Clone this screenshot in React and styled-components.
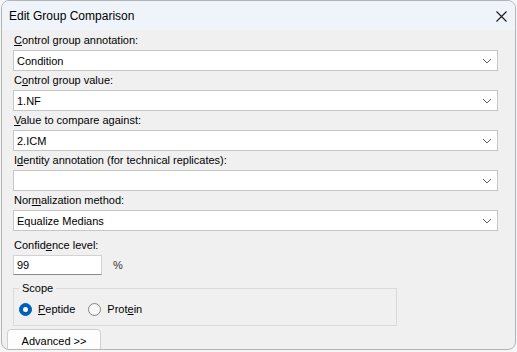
import styled, { createGlobalStyle } from "styled-components";

const GlobalStyle = createGlobalStyle`
    body {
        margin: 0;
        background: #f5f6f8;
        font-family: "Liberation Sans", Arial, sans-serif;
        color: #000;
    }
`;

const fields = [
    { label: ["", "C", "ontrol group annotation:"], value: "Condition" },
    { label: ["C", "o", "ntrol group value:"], value: "1.NF" },
    { label: ["", "V", "alue to compare against:"], value: "2.ICM" },
    { label: ["I", "d", "entity annotation (for technical replicates):"], value: "" },
    { label: ["Nor", "m", "alization method:"], value: "Equalize Medians" },
];

const Chevron = () => (
    <svg width="10" height="6" viewBox="0 0 10 6">
        <path d="M1 1 L5 5 L9 1" fill="none" stroke="#5a5a5a" strokeWidth="1" />
    </svg>
);

const CloseIcon = () => (
    <svg width="11" height="11" viewBox="0 0 11 11">
        <path d="M0.5 0.5 L10.5 10.5 M10.5 0.5 L0.5 10.5" stroke="#1a1a1a" strokeWidth="1.1" />
    </svg>
);

// text with an underlined access key
const Mnemonic = ({ parts }) => (
    <span>
        {parts[0]}
        <u>{parts[1]}</u>
        {parts[2]}
    </span>
);

const App = () => {
    return (
        <>
            <GlobalStyle />
            <Window>
                <TitleBar>
                    <Title>Edit Group Comparison</Title>
                    <CloseButton><CloseIcon /></CloseButton>
                </TitleBar>
                <Body>
                    {fields.map((f, i) => (
                        <Field key={i}>
                            <Label><Mnemonic parts={f.label} /></Label>
                            <Combo>
                                <span>{f.value}</span>
                                <Chevron />
                            </Combo>
                        </Field>
                    ))}
                    <Field $spaced>
                        <Label><Mnemonic parts={["Confid", "e", "nce level:"]} /></Label>
                        <InputRow>
                            <TextBox>99</TextBox>
                            <Unit>%</Unit>
                        </InputRow>
                    </Field>
                    <GroupBox>
                        <Legend>Scope</Legend>
                        <RadioRow>
                            <RadioItem>
                                <Radio $checked />
                                <Mnemonic parts={["", "P", "eptide"]} />
                            </RadioItem>
                            <RadioItem>
                                <Radio />
                                <Mnemonic parts={["Prot", "e", "in"]} />
                            </RadioItem>
                        </RadioRow>
                    </GroupBox>
                </Body>
                <Footer>
                    <Button>Advanced &gt;&gt;</Button>
                </Footer>
            </Window>
        </>
    );
};

export default App;

const Window = styled.div`
    box-sizing: border-box;
    width: 515px;
    height: 350px;
    margin-left: 1px;
    border: 1px solid #b4b4b4;
    border-radius: 8px;
    overflow: hidden;
    background: #f0f0f0;
    display: flex;
    flex-direction: column;
`;

const TitleBar = styled.div`
    height: 29px;
    flex-shrink: 0;
    background: #eef4fa;
    display: flex;
    align-items: center;
    justify-content: space-between;
    padding: 0 8px 0 7px;
`;

const Title = styled.span`
    font-size: 12px;
    padding-top: 1px;
`;

const CloseButton = styled.div`
    display: flex;
    align-items: center;
    padding-top: 1px;
`;

const Body = styled.div`
    padding: 2px 0 0 11px;
    display: flex;
    flex-direction: column;
`;

const Field = styled.div`
    display: flex;
    flex-direction: column;
    margin-top: ${p => (p.$spaced ? "6px" : "1px")};
    &:first-child {
        margin-top: 0;
    }
`;

const Label = styled.div`
    font-size: 11px;
    line-height: 16px;
    margin-bottom: 2px;
    padding-left: 1px;
    white-space: nowrap;
`;

const Combo = styled.div`
    box-sizing: border-box;
    width: 485px;
    height: 21px;
    background: #fff;
    border: 1px solid #c6c6c6;
    display: flex;
    align-items: center;
    justify-content: space-between;
    padding: 0 5px 0 3px;
    font-size: 11px;
`;

const InputRow = styled.div`
    display: flex;
    align-items: center;
    gap: 11px;
`;

const TextBox = styled.div`
    box-sizing: border-box;
    width: 89px;
    height: 20px;
    background: #fff;
    border: 1px solid #d2d2d2;
    border-bottom-color: #8a8a8a;
    padding: 0 3px;
    display: flex;
    align-items: center;
    font-size: 11px;
`;

const Unit = styled.span`
    font-size: 11px;
    color: #333;
`;

const GroupBox = styled.fieldset`
    box-sizing: border-box;
    width: 384px;
    margin: 5px 0 0 0;
    padding: 0 5px 8px 5px;
    border: 1px solid #dadada;
    border-radius: 0;
`;

const Legend = styled.legend`
    font-size: 11px;
    line-height: 16px;
    padding: 0 3px;
`;

const RadioRow = styled.div`
    display: flex;
    align-items: center;
    gap: 13px;
    margin-top: 5px;
    height: 16px;
`;

const RadioItem = styled.label`
    display: flex;
    align-items: center;
    gap: 6px;
    font-size: 11px;
`;

const Radio = styled.span`
    box-sizing: border-box;
    width: 13px;
    height: 13px;
    border-radius: 50%;
    display: flex;
    align-items: center;
    justify-content: center;
    background: ${p => (p.$checked ? "#005fb8" : "#f7f7f7")};
    border: 1px solid ${p => (p.$checked ? "#005fb8" : "#858585")};
    &::after {
        content: "";
        width: 5px;
        height: 5px;
        border-radius: 50%;
        background: #fff;
        display: ${p => (p.$checked ? "block" : "none")};
    }
`;

const Footer = styled.div`
    padding: 3px 0 0 5px;
`;

const Button = styled.div`
    box-sizing: border-box;
    width: 94px;
    height: 23px;
    background: #fdfdfd;
    border: 1px solid #d0d0d0;
    border-radius: 4px;
    display: flex;
    align-items: center;
    justify-content: center;
    font-size: 11px;
`;
